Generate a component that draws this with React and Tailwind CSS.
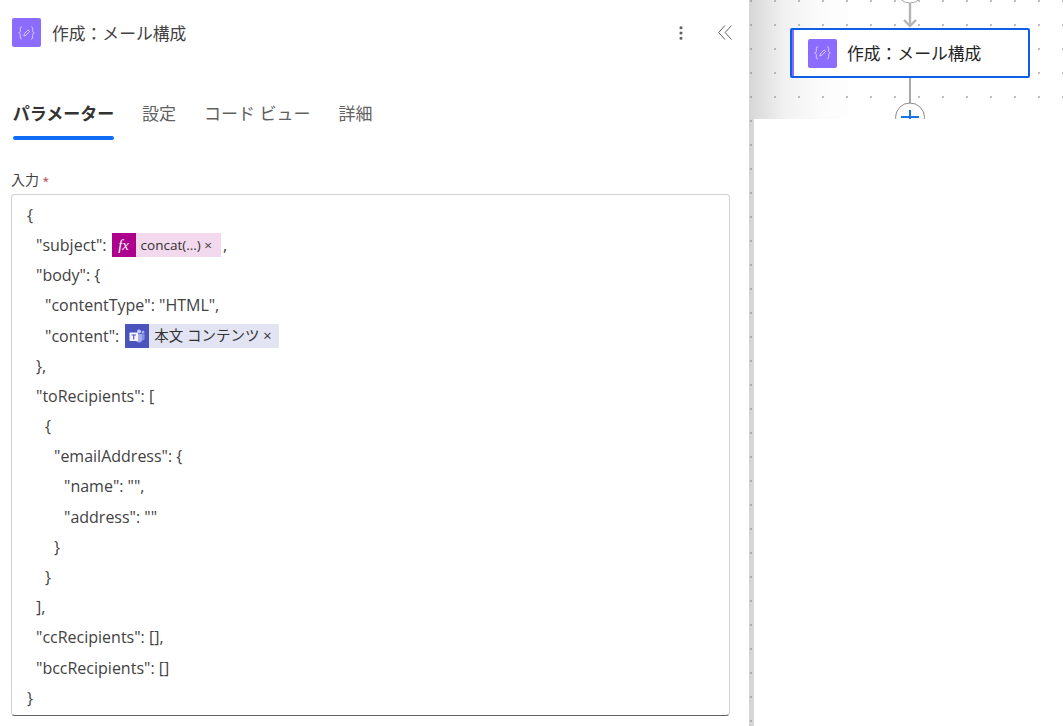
import { MoreVertical } from "lucide-react";

const FONT = "font-['Open_Sans','Noto_Sans_CJK_JP',sans-serif]";

// Compose action icon: {pencil} on purple
const ComposeIcon = () => (
  <div className="flex h-[29px] w-[29px] shrink-0 items-center justify-center rounded-[2px] bg-[#8c6cff]">
    <svg width="17" height="14" viewBox="0 0 17 14" fill="none" stroke="#e6deff" strokeWidth="0.8">
      <path d="M4 0.8c-1.6 0-1.7 0.8-1.7 2v2.2c0 1-0.5 1.7-1.6 1.9 1.1 0.2 1.6 0.9 1.6 1.9v2.2c0 1.2 0.1 2 1.7 2" />
      <path d="M13 0.8c1.6 0 1.7 0.8 1.7 2v2.2c0 1 0.5 1.7 1.6 1.9-1.1 0.2-1.6 0.9-1.6 1.9v2.2c0 1.2-0.1 2-1.7 2" />
      <path d="M5.8 10l0.6-2.2 3.6-3.9 1.6 1.5-3.7 3.9z" />
    </svg>
  </div>
);

const FxToken = () => (
  <span className="-ml-[1px] inline-flex h-6 items-center bg-[#f3d9ee] text-[13.5px] text-[#323130]">
    <span className="flex h-6 w-6 items-center justify-center bg-[#ad008c] font-['Liberation_Serif',serif] text-[15px] italic text-white">
      fx
    </span>
    <span className="pl-[5px] pr-[9px]">concat(...) ×</span>
  </span>
);

const TeamsToken = () => (
  <span className="inline-flex h-6 items-center bg-[#e2e4f4] text-[14.5px] text-[#323130]">
    <span className="flex h-6 w-6 items-center justify-center bg-[#4b53bc]">
      <svg width="16" height="14" viewBox="0 0 16 14">
        <circle cx="10" cy="2.5" r="2" fill="#c5cbfa" />
        <circle cx="14" cy="3.2" r="1.4" fill="#aab2f2" />
        <path d="M7 5h6v5.5a3 3 0 0 1-6 0z" fill="#a6aeee" />
        <path d="M13 5h2.6v4.4a2 2 0 0 1-2.6 1.9z" fill="#8790e0" />
        <rect x="0.5" y="3.5" width="8.5" height="8.5" rx="0.8" fill="#f4f5ff" />
        <path d="M2.6 5.6h4.3v1H5.3v4H4.2v-4H2.6z" fill="#4b53bc" />
      </svg>
    </span>
    <span className="pl-[5px] pr-[7px]">本文 コンテンツ ×</span>
  </span>
);

const LINES = [
  { indent: "pl-[15px]", text: "{" },
  { indent: "pl-[24px]", text: '"subject":', token: <FxToken />, after: "," },
  { indent: "pl-[24px]", text: '"body": {' },
  { indent: "pl-[33px]", text: '"contentType": "HTML",' },
  { indent: "pl-[33px]", text: '"content":', token: <TeamsToken /> },
  { indent: "pl-[24px]", text: "}," },
  { indent: "pl-[24px]", text: '"toRecipients": [' },
  { indent: "pl-[33px]", text: "{" },
  { indent: "pl-[42px]", text: '"emailAddress": {' },
  { indent: "pl-[52px]", text: '"name": "",' },
  { indent: "pl-[52px]", text: '"address": ""' },
  { indent: "pl-[42px]", text: "}" },
  { indent: "pl-[33px]", text: "}" },
  { indent: "pl-[24px]", text: "]," },
  { indent: "pl-[24px]", text: '"ccRecipients": [],' },
  { indent: "pl-[24px]", text: '"bccRecipients": []' },
  { indent: "pl-[15px]", text: "}" },
];

const TABS = ["設定", "コード ビュー", "詳細"];

const App = () => {
  return (
    <div className={`flex h-[726px] w-[1063px] overflow-hidden bg-white ${FONT}`}>
      {/* Left panel */}
      <div className="flex w-[749px] shrink-0 flex-col">
        <div className="flex h-[65px] items-center pl-3 pr-[17px]">
          <ComposeIcon />
          <span className="ml-[11px] pt-[2px] text-[16.8px] text-[#424242]">作成：メール構成</span>
          <MoreVertical className="ml-auto h-[18px] w-[18px] text-[#616161]" strokeWidth={2.2} />
          <svg className="ml-[28px]" width="14" height="15" viewBox="0 0 14 15" fill="none" stroke="#616161" strokeWidth="1">
            <path d="M7 0.5L0.7 7.5L7 14.5M13.5 0.5L7.2 7.5L13.5 14.5" />
          </svg>
        </div>

        <div className="mt-[29px] flex h-[46px] gap-7 pl-[13px]">
          <div className="flex w-[101px] flex-col items-center">
            <span className="mt-[7px] whitespace-nowrap text-[17px] font-bold text-[#333333]">パラメーター</span>
            <span className="mt-auto h-1 w-full rounded-full bg-[#0f6cf5]" />
          </div>
          {TABS.map((tab) => (
            <span key={tab} className="pt-[7px] text-[17px] text-[#616161]">
              {tab}
            </span>
          ))}
        </div>

        <div className="mt-[30px] pl-[11px] text-sm leading-[20px] text-[#424242]">
          入力 <span className="text-[11px] text-[#b3353b]">*</span>
        </div>

        <div className="ml-[11px] mt-[3px] w-[719px] rounded border border-[#d1d1d1] border-b-[#616161] pb-[2px] pt-[4.7px]">
          {LINES.map((line, i) => (
            <div
              key={i}
              className={`flex h-[30.2px] items-center gap-[6px] whitespace-pre text-base text-[#424242] ${line.indent}`}
            >
              <span>{line.text}</span>
              {line.token}
              {line.after && <span className="-ml-[4px]">{line.after}</span>}
            </div>
          ))}
        </div>
      </div>

      {/* Canvas side */}
      <div className="relative flex flex-1 flex-col">
        <div className="h-[119px] shrink-0 bg-[linear-gradient(to_right,#d6d6d6_0px,#f1f1f1_35px,#fbfbfb_70px,#ffffff_110px)]" />
        <div className="flex-1 bg-[#d6d6d6] pl-[5px]">
          <div className="relative z-10 h-full bg-white" />
        </div>

        {/* Dot grid sits over the backgrounds, the white pane covers it */}
        <div className="absolute inset-0 bg-[radial-gradient(circle,#8f8f8f_0.5px,transparent_1px)] bg-[size:24px_24px] bg-[position:-10px_-11px]" />

        {/* Edges */}
        <svg className="absolute left-[141px] top-0" width="40" height="119" viewBox="0 0 40 119" fill="none">
          <circle cx="20" cy="-11" r="14" fill="#fff" stroke="#a8a8a8" />
          <path d="M20 3V26M14 20l6 6 6-6" stroke="#b5b5b5" strokeWidth="2.4" />
          <path d="M20 78V104" stroke="#a8a8a8" strokeWidth="2" />
          <circle cx="20" cy="117.5" r="14.5" fill="#fff" stroke="#8a8a8a" />
          <path d="M20 110V119M11 117H29" stroke="#1a73e8" strokeWidth="2" />
        </svg>

        {/* Selected node */}
        <div className="absolute left-[41px] top-[28px] flex h-[50px] w-[240px] items-center rounded-[2px] border-2 border-[#0f5fe6] bg-white pl-[16px] shadow-[inset_2px_0_0_#8c6cff]">
          <ComposeIcon />
          <span className="ml-[10px] whitespace-nowrap pt-[2px] text-[16.8px] text-[#242424]">作成：メール構成</span>
        </div>
      </div>
    </div>
  );
};

export default App;
